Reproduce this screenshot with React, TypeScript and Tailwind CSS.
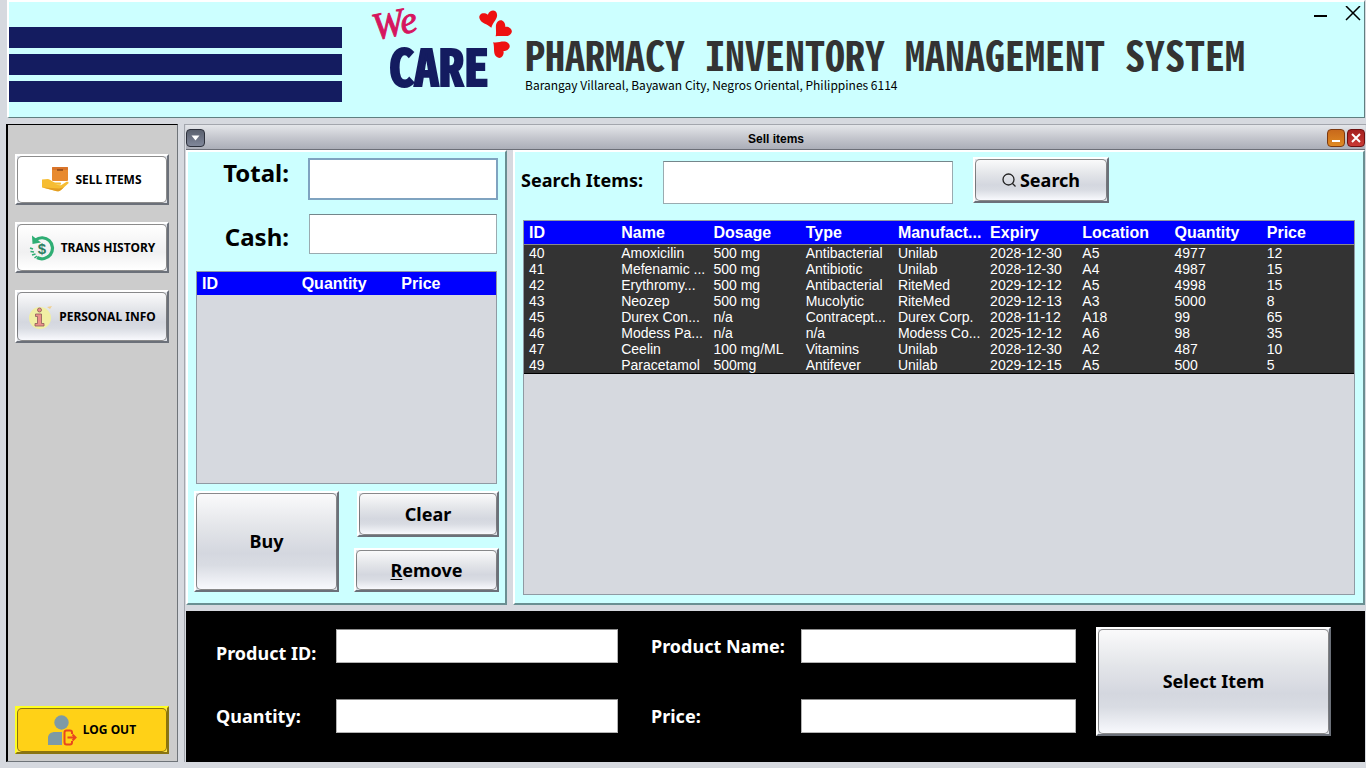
import type { ReactNode } from "react";

const columns = ["ID", "Name", "Dosage", "Type", "Manufact...", "Expiry", "Location", "Quantity", "Price"];

const items = [
  ["40", "Amoxicilin", "500 mg", "Antibacterial", "Unilab", "2028-12-30", "A5", "4977", "12"],
  ["41", "Mefenamic ...", "500 mg", "Antibiotic", "Unilab", "2028-12-30", "A4", "4987", "15"],
  ["42", "Erythromy...", "500 mg", "Antibacterial", "RiteMed", "2029-12-12", "A5", "4998", "15"],
  ["43", "Neozep", "500 mg", "Mucolytic", "RiteMed", "2029-12-13", "A3", "5000", "8"],
  ["45", "Durex Con...", "n/a", "Contracept...", "Durex Corp.", "2028-11-12", "A18", "99", "65"],
  ["46", "Modess Pa...", "n/a", "n/a", "Modess Co...", "2025-12-12", "A6", "98", "35"],
  ["47", "Ceelin", "100 mg/ML", "Vitamins", "Unilab", "2028-12-30", "A2", "487", "10"],
  ["49", "Paracetamol", "500mg", "Antifever", "Unilab", "2029-12-15", "A5", "500", "5"],
];

const silver = "bg-[linear-gradient(180deg,#fafafb_0%,#e3e5e9_35%,#d4d7df_62%,#d9dce3_75%,#f8f9fd_100%)]";

type BevelProps = {
  children: ReactNode;
  className?: string;
  face?: string;
  edge?: string;
};

function BevelButton({
  children,
  className = "",
  face = silver,
  edge = "border-t-white border-l-white border-r-[#6b7079] border-b-[#6b7079] bg-[#dfe2e8]",
}: BevelProps) {
  return (
    <button type="button" className={`flex border-2 ${edge} ${className}`}>
      <span
        className={`flex h-full w-full items-center justify-center rounded-[5px] border border-black/45 whitespace-nowrap ${face}`}
      >
        {children}
      </span>
    </button>
  );
}

function Heart({ x, y, turn }: { x: number; y: number; turn: number }) {
  return (
    <path
      transform={`translate(${x} ${y}) rotate(${turn})`}
      d="M0 9C-3 4-9 2-9-3C-9-8-3-8.500 0-4.500C3-8.500 9-8 9-3C9 2 3 4 0 9Z"
      fill="#ee1111"
    />
  );
}

function Logo() {
  return (
    <svg width="146" height="88" viewBox="0 0 146 88" className="shrink-0 overflow-visible" role="img" aria-label="We Care">
      <text
        x="3"
        y="38"
        transform="rotate(-12 3 38)"
        fontFamily="'Liberation Serif', serif"
        fontStyle="italic"
        fontSize="38"
        fill="#d6155f"
        stroke="#d6155f"
        strokeWidth="1"
      >
        We
      </text>
      <text
        x="17"
        y="84"
        fontFamily="'Noto Sans Mono CJK SC', 'Liberation Sans', sans-serif"
        fontWeight="700"
        fontSize="50"
        fill="#141c60"
        stroke="#141c60"
        strokeWidth="2"
      >
        CARE
      </text>
      <Heart x={117} y={17} turn={-15} />
      <Heart x={130} y={28} turn={45} />
      <Heart x={128} y={46} turn={130} />
    </svg>
  );
}

function SellIcon() {
  return (
    <svg width="27" height="27" viewBox="0 0 27 27" className="shrink-0">
      <rect x="10" y="1" width="16" height="14" rx="1" fill="#e88a2e" />
      <rect x="10" y="1" width="16" height="3" rx="1" fill="#d9742a" />
      <path d="M15 4h6" stroke="#7c3f16" strokeWidth="1.300" />
      <path
        d="M0 13.500L6 13C9 13.500 10 16 13 16.500H18C19.500 16.500 19.500 18.500 18 18.800H13L19 19.200L24.500 15.800C26 15.200 27.300 16.400 26.200 17.600L19 24C17.500 25.300 16 25.500 14 25L0 21.500Z"
        fill="#f6bd33"
      />
      <path d="M1 21.500L14 25C16 25.500 17.500 25.300 19 24L22 21.300L17 22.500Z" fill="#e39d22" />
    </svg>
  );
}

function HistoryIcon() {
  return (
    <svg width="26" height="28" viewBox="0 0 26 28" className="shrink-0" fill="none">
      <path d="M6.500 6A10.500 10.500 0 1 1 8 23.500" stroke="#2fae74" strokeWidth="3.200" />
      <path d="M3 1.500L3.500 10L12 8.500Z" fill="#2fae74" />
      <path d="M1 14L4 15M1.500 17.500L5 18M3 21L6.500 20M5.500 24L8 22" stroke="#2fae74" strokeWidth="1.600" />
      <text x="13" y="19.500" textAnchor="middle" fontFamily="'Liberation Sans', sans-serif" fontWeight="700" fontSize="15" fill="#2c7f62">
        $
      </text>
    </svg>
  );
}

function InfoIcon() {
  return (
    <svg width="25" height="26" viewBox="0 0 25 26" className="shrink-0">
      <circle cx="12" cy="14" r="11" fill="#f1efa4" />
      <path d="M19 3L24 2L22 5Z" fill="#f2cf8a" />
      <g fill="#eb8f8a" stroke="#8a5a58" strokeWidth="0.800">
        <circle cx="11.500" cy="6" r="2" />
        <path d="M7.500 10H13.500V19.500H16V22H7V19.500H9.500V12.500H7.500Z" />
      </g>
    </svg>
  );
}

function LogoutIcon() {
  return (
    <svg width="29" height="31" viewBox="0 0 29 31" className="shrink-0" fill="none">
      <circle cx="13.500" cy="7.500" r="7.200" fill="#7e9aa5" />
      <path d="M0 30V23C0 19 3 17 7 17H14V30Z" fill="#7e9aa5" />
      <path d="M24 19V17.500C24 16 23 15.500 22 15.500H18.500C17 15.500 16.500 16.500 16.500 17.500V27C16.500 29 17.500 29.500 18.500 29.500H22C23.500 29.500 24 28.500 24 27.500V26" stroke="#e8471f" strokeWidth="2" />
      <path d="M19.500 22.500H27M24.500 19.500L27.500 22.500L24.500 25.500" stroke="#e8471f" strokeWidth="2" />
    </svg>
  );
}

function Header() {
  return (
    <header className="ml-[7px] mr-px flex h-[118px] border-t-2 border-l-2 border-r border-b border-t-white border-l-white border-r-[#5f7f80] border-b-[#5f7f80] bg-[#ccffff]">
      <div className="mt-[25px] flex w-[333px] shrink-0 flex-col gap-1.5" aria-hidden>
        <div className="h-[21px] bg-[#141c60]" />
        <div className="h-[21px] bg-[#141c60]" />
        <div className="h-[21px] bg-[#141c60]" />
      </div>
      <div className="ml-[30px] flex">
        <Logo />
      </div>
      <div className="ml-[7px] pt-[30px]">
        <h1 className="font-['Noto_Sans_Mono_CJK_SC','Liberation_Mono',monospace] text-[40px] leading-[44px] font-bold whitespace-nowrap text-[#333333]">
          PHARMACY INVENTORY MANAGEMENT SYSTEM
        </h1>
        <p className="font-['Noto_Sans_CJK_SC',sans-serif] text-[12px] leading-[18px] text-black">
          Barangay Villareal, Bayawan City, Negros Oriental, Philippines 6114
        </p>
      </div>
      <div className="mt-1 mr-[3px] ml-auto flex h-4 gap-4">
        <button type="button" aria-label="Minimize window">
          <svg width="16" height="16" viewBox="0 0 16 16">
            <path d="M1 10H14" stroke="#000" strokeWidth="2" />
          </svg>
        </button>
        <button type="button" aria-label="Close window">
          <svg width="16" height="16" viewBox="0 0 16 16">
            <path d="M1 0L15 14M15 0L1 14" stroke="#000" strokeWidth="1.500" />
          </svg>
        </button>
      </div>
    </header>
  );
}

function Sidebar() {
  return (
    <nav className="flex w-[172px] shrink-0 flex-col gap-[17px] border-t border-l-2 border-r border-b border-t-black border-l-black border-r-[#6f7479] border-b-[#6f7479] bg-[#cccccc] pt-[29px] pr-2 pb-[7px] pl-[7px] text-[12px] font-bold text-black">
      <BevelButton className="h-[51px]" face="bg-white gap-1.5">
        <SellIcon />
        SELL ITEMS
      </BevelButton>
      <BevelButton className="h-[51px]" face="bg-[linear-gradient(180deg,#ffffff,#f0f0f1_60%,#ffffff)] gap-1.5">
        <HistoryIcon />
        TRANS HISTORY
      </BevelButton>
      <BevelButton className="h-[53px]" face={`${silver} gap-1.5`}>
        <InfoIcon />
        PERSONAL INFO
      </BevelButton>
      <BevelButton
        className="mt-auto h-12"
        face="bg-[#ffd117] gap-1.5"
        edge="border-t-[#ffff20] border-l-[#ffff20] border-r-[#8a7410] border-b-[#8a7410] bg-[#ffe650]"
      >
        <LogoutIcon />
        LOG OUT
      </BevelButton>
    </nav>
  );
}

function TitleBar() {
  return (
    <div className="flex h-[25px] items-center border-b border-[#6c6f78] bg-[linear-gradient(180deg,#e4e6ea,#c6c8cf_50%,#abaeb8)] pt-0.5">
      <button
        type="button"
        aria-label="Window menu"
        className="flex h-[18px] w-[19px] items-center justify-center rounded border border-[#2c303b] bg-[linear-gradient(180deg,#5a606e,#80879a)]"
      >
        <svg width="9" height="6" viewBox="0 0 9 6">
          <path d="M0.500 0.500H8.500L4.500 5.500Z" fill="#fff" />
        </svg>
      </button>
      <span className="flex-1 pt-0.5 pl-5 text-center font-['Liberation_Sans',sans-serif] text-[12px] leading-4 font-bold text-black">
        Sell items
      </span>
      <div className="flex gap-0.5">
        <button
          type="button"
          aria-label="Minimize"
          className="flex h-[18px] w-[18px] items-center justify-center rounded border border-[#7d3a10] bg-[linear-gradient(180deg,#c8691c,#e08a22)]"
        >
          <svg width="10" height="10" viewBox="0 0 10 10">
            <path d="M1 8H9" stroke="#fff" strokeWidth="2" />
          </svg>
        </button>
        <button
          type="button"
          aria-label="Close"
          className="flex h-[18px] w-[18px] items-center justify-center rounded border border-[#6d1010] bg-[linear-gradient(180deg,#a52020,#c93a35)]"
        >
          <svg width="10" height="10" viewBox="0 0 10 10">
            <path d="M1 1L9 9M9 1L1 9" stroke="#fff" strokeWidth="2" />
          </svg>
        </button>
      </div>
    </div>
  );
}

const panel =
  "flex flex-col border-2 border-t-white border-l-white border-r-[#6a8f92] border-b-[#6a8f92] bg-[#ccffff]";
const field = "border border-[#9aabb0] border-t-[#74868b] bg-white px-2 text-[18px] text-black outline-none";
const darkField =
  "h-[34px] w-full border border-[#b4b4b4] border-t-[#8c8c8c] bg-white px-2 text-[18px] text-black outline-none";

function CartPanel() {
  return (
    <section className={`${panel} w-[321px] shrink-0 pt-1.5 pr-1.5 pb-[11px] pl-1.5`}>
      <div className="flex justify-end gap-[19px] pr-px">
        <label htmlFor="total" className="text-[24px] leading-[30px] font-bold">
          Total:
        </label>
        <input
          id="total"
          className="h-[42px] w-[190px] border-2 border-[#7fa3c0] bg-white px-2 text-[18px] text-black outline-none"
        />
      </div>
      <div className="mt-3.5 flex items-center justify-end gap-5 pr-0.5">
        <label htmlFor="cash" className="pt-1.5 text-[24px] leading-8 font-bold">
          Cash:
        </label>
        <input id="cash" className={`${field} h-10 w-[188px]`} />
      </div>
      <div className="mt-[17px] mr-0.5 ml-0.5 flex-1 border border-[#8f9aa3] bg-[#d6d9df]">
        <table className="w-full table-fixed font-['Liberation_Sans',sans-serif]">
          <thead>
            <tr className="h-[23px] bg-[#0000ff] text-left text-[16px] leading-5 text-white">
              <th className="px-[5px] py-0">ID</th>
              <th className="px-[5px] py-0">Quantity</th>
              <th className="px-[5px] py-0">Price</th>
            </tr>
          </thead>
        </table>
      </div>
      <div className="mt-[7px] flex justify-between text-[18px] font-bold">
        <BevelButton className="h-[101px] w-[145px]">Buy</BevelButton>
        <div className="flex flex-col items-end justify-between">
          <BevelButton className="h-[46px] w-[142px]">Clear</BevelButton>
          <BevelButton className="h-[44px] w-[145px]">
            <span>
              <u className="underline-offset-2">R</u>emove
            </span>
          </BevelButton>
        </div>
      </div>
    </section>
  );
}

function SearchPanel() {
  return (
    <section className={`${panel} min-w-0 flex-1 pt-[5px] pr-2 pb-2 pl-1.5`}>
      <div className="flex items-start text-[18px] font-bold">
        <label htmlFor="search" className="w-[142px] pt-[11px] leading-6 whitespace-nowrap">
          Search Items:
        </label>
        <input id="search" className={`${field} mt-1 h-[43px] w-[290px] font-normal`} />
        <BevelButton className="ml-5 h-[46px] w-[136px]" face={`${silver} gap-1`}>
          <svg width="14" height="14" viewBox="0 0 14 14" fill="none" stroke="#222" strokeWidth="1.300">
            <circle cx="6.500" cy="6.500" r="5.500" />
            <path d="M10.500 10.500L13.500 13.500" />
          </svg>
          Search
        </BevelButton>
      </div>
      <div className="mt-4 ml-0.5 flex-1 border border-[#8f9aa3] bg-[#d6d9df]">
        <table className="w-full table-fixed font-['Liberation_Sans',sans-serif]">
          <thead>
            <tr className="h-[23px] border-b border-[#8a8a8a] bg-[#0000ff] text-left text-[16px] leading-5 text-white">
              {columns.map((name) => (
                <th key={name} className="pt-0.5 pb-0 pl-[5px] whitespace-nowrap">
                  {name}
                </th>
              ))}
            </tr>
          </thead>
          <tbody className="border-b border-black bg-[#333333] text-[14px] leading-4 text-white">
            {items.map((row) => (
              <tr key={row[0]}>
                {row.map((cell, i) => (
                  <td key={i} className="py-0 pr-0 pl-[5px] whitespace-nowrap">
                    {cell}
                  </td>
                ))}
              </tr>
            ))}
          </tbody>
        </table>
      </div>
    </section>
  );
}

function ProductForm() {
  return (
    <form className="mt-1.5 flex bg-black pt-4 pr-[34px] pb-[26px] pl-[30px] text-[18px] font-bold text-white">
      <div className="grid flex-1 grid-cols-[120px_minmax(0,282fr)_33px_150px_minmax(0,275fr)] content-start items-center gap-y-9 pt-0.5">
        <label htmlFor="product-id" className="h-[34px] pt-3 leading-6">
          Product ID:
        </label>
        <input id="product-id" className={darkField} />
        <label htmlFor="product-name" className="col-start-4 leading-6 whitespace-nowrap">
          Product Name:
        </label>
        <input id="product-name" className={darkField} />
        <label htmlFor="quantity" className="leading-6">
          Quantity:
        </label>
        <input id="quantity" className={darkField} />
        <label htmlFor="price" className="col-start-4 leading-6">
          Price:
        </label>
        <input id="price" className={darkField} />
      </div>
      <BevelButton className="ml-5 h-[109px] w-[235px] text-black">Select Item</BevelButton>
    </form>
  );
}

export default function App() {
  return (
    <div className="flex min-h-screen flex-col bg-[#d6d9df] pb-1.5 font-['Noto_Sans',sans-serif] text-black">
      <Header />
      <div className="mt-1.5 ml-1.5 flex flex-1 gap-1.5">
        <Sidebar />
        <main className="flex min-w-0 flex-1 flex-col border-t border-l border-[#a3a6ad] pr-px pl-px">
          <TitleBar />
          <div className="flex flex-1 gap-1.5">
            <CartPanel />
            <SearchPanel />
          </div>
          <ProductForm />
        </main>
      </div>
    </div>
  );
}
